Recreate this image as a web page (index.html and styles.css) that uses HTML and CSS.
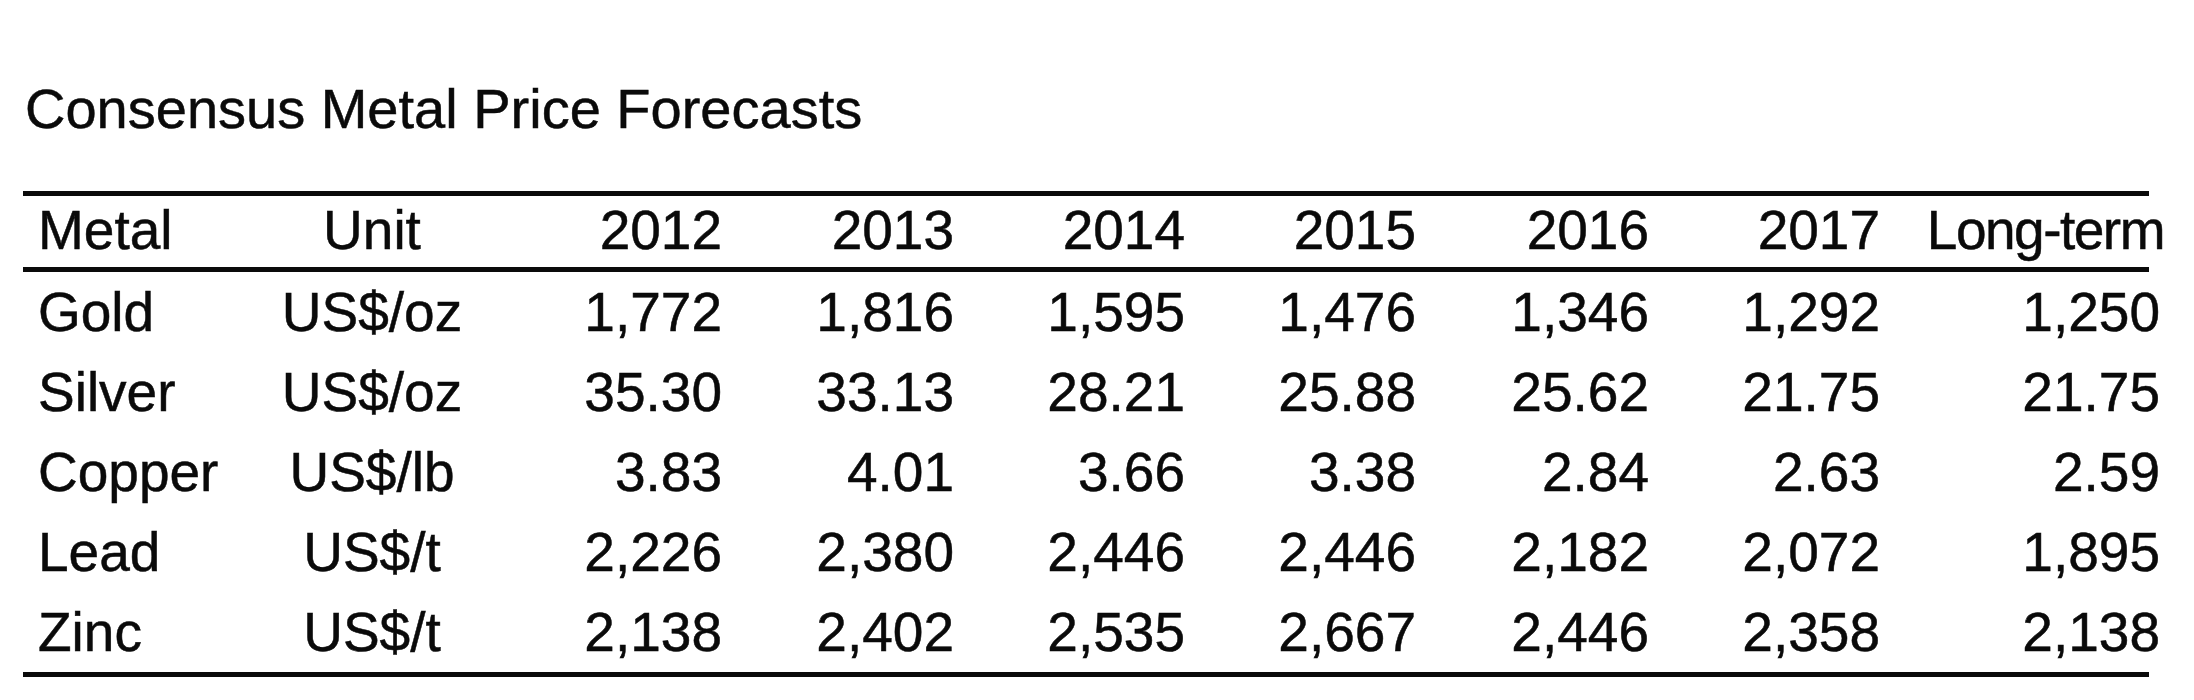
FILE: index.html
```html
<!DOCTYPE html>
<html lang="en">
<head>
<meta charset="utf-8">
<title>Consensus Metal Price Forecasts</title>
<link rel="stylesheet" href="styles.css">
</head>
<body>
<main class="page">
  <h1 class="title">Consensus Metal Price Forecasts</h1>
  <div class="table">
    <div class="row head">
      <div class="cell metal">Metal</div>
      <div class="cell unit">Unit</div>
      <div class="cell num">2012</div>
      <div class="cell num">2013</div>
      <div class="cell num">2014</div>
      <div class="cell num">2015</div>
      <div class="cell num">2016</div>
      <div class="cell num">2017</div>
      <div class="cell num longterm">Long-term</div>
    </div>
    <div class="body">
      <div class="row">
        <div class="cell metal">Gold</div>
        <div class="cell unit">US$/oz</div>
        <div class="cell num">1,772</div>
        <div class="cell num">1,816</div>
        <div class="cell num">1,595</div>
        <div class="cell num">1,476</div>
        <div class="cell num">1,346</div>
        <div class="cell num">1,292</div>
        <div class="cell num">1,250</div>
      </div>
      <div class="row">
        <div class="cell metal">Silver</div>
        <div class="cell unit">US$/oz</div>
        <div class="cell num">35.30</div>
        <div class="cell num">33.13</div>
        <div class="cell num">28.21</div>
        <div class="cell num">25.88</div>
        <div class="cell num">25.62</div>
        <div class="cell num">21.75</div>
        <div class="cell num">21.75</div>
      </div>
      <div class="row">
        <div class="cell metal">Copper</div>
        <div class="cell unit">US$/lb</div>
        <div class="cell num">3.83</div>
        <div class="cell num">4.01</div>
        <div class="cell num">3.66</div>
        <div class="cell num">3.38</div>
        <div class="cell num">2.84</div>
        <div class="cell num">2.63</div>
        <div class="cell num">2.59</div>
      </div>
      <div class="row">
        <div class="cell metal">Lead</div>
        <div class="cell unit">US$/t</div>
        <div class="cell num">2,226</div>
        <div class="cell num">2,380</div>
        <div class="cell num">2,446</div>
        <div class="cell num">2,446</div>
        <div class="cell num">2,182</div>
        <div class="cell num">2,072</div>
        <div class="cell num">1,895</div>
      </div>
      <div class="row">
        <div class="cell metal">Zinc</div>
        <div class="cell unit">US$/t</div>
        <div class="cell num">2,138</div>
        <div class="cell num">2,402</div>
        <div class="cell num">2,535</div>
        <div class="cell num">2,667</div>
        <div class="cell num">2,446</div>
        <div class="cell num">2,358</div>
        <div class="cell num">2,138</div>
      </div>
    </div>
  </div>
</main>
</body>
</html>
```

FILE: styles.css
```css
html, body {
  margin: 0;
  padding: 0;
  background: #ffffff;
}

body {
  font-family: "Liberation Sans", Arial, Helvetica, sans-serif;
  color: #0a0a0a;
  -webkit-text-stroke: 0.5px #0a0a0a;
}

.page {
  padding: 77px 0 0 23px;
}

.title {
  margin: 0 0 50px 2px;
  font-size: 56px;
  font-weight: normal;
  line-height: 64px;
}

.table {
  width: 2126px;
  border-top: 5px solid #0a0a0a;
  border-bottom: 5px solid #0a0a0a;
  font-size: 55px;
}

.row {
  display: grid;
  grid-template-columns: 239px 220px 240px 232px 231px 231px 233px 231px 280px;
  line-height: 80px;
  white-space: nowrap;
}

.head {
  line-height: 69px;
  padding-bottom: 2px;
  border-bottom: 5px solid #0a0a0a;
}

.metal {
  padding-left: 15px;
}

.unit {
  text-align: center;
}

.num {
  text-align: right;
}

.longterm {
  letter-spacing: -1.5px;
  margin-right: -4px;
}
```
